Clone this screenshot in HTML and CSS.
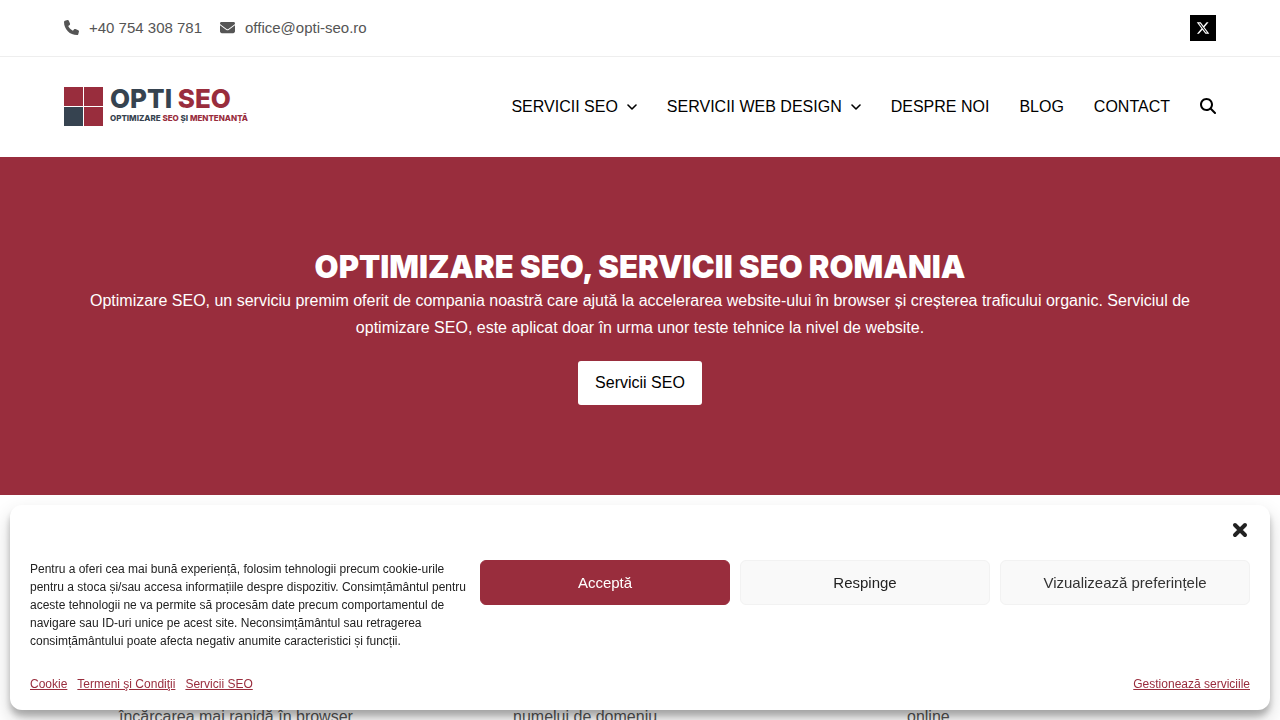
FILE: index.html
```
<!DOCTYPE html>
<html lang="ro">
<head>
  <meta charset="UTF-8">
  <meta name="viewport" content="width=device-width, initial-scale=1.0">
  <title>Optimizare SEO, Servicii SEO Romania - Opti SEO</title>
  <link rel="stylesheet" href="styles.css">
</head>
<body>
  <div class="top-bar">
    <div class="container top-bar-inner">
      <div class="contact">
        <a href="tel:+40754308781">
          <svg class="icon" viewBox="0 0 512 512" aria-hidden="true"><path d="M164.900 24.600c-7.700-18.600-28-28.500-47.400-23.200l-88 24C12.100 30.200 0 46 0 64c0 247.400 200.600 448 448 448c18 0 33.800-12.100 38.600-29.500l24-88c5.300-19.400-4.600-39.700-23.200-47.400l-96-40c-16.300-6.800-35.200-2.100-46.300 11.600L304.700 368C234.300 334.700 177.300 277.700 144 207.300L193.300 167c13.700-11.200 18.400-30 11.600-46.300l-40-96z"/></svg>
          +40 754 308 781
        </a>
        <a href="mailto:office@opti-seo.ro">
          <svg class="icon" viewBox="0 0 512 512" aria-hidden="true"><path d="M48 64C21.500 64 0 85.500 0 112c0 15.100 7.100 29.300 19.200 38.400L236.800 313.600c11.400 8.500 27 8.500 38.400 0L492.800 150.400c12.100-9.100 19.200-23.300 19.200-38.400c0-26.500-21.500-48-48-48H48zM0 176V384c0 35.300 28.700 64 64 64H448c35.300 0 64-28.700 64-64V176L294.400 339.200c-22.800 17.100-54 17.100-76.800 0L0 176z"/></svg>
          office@opti-seo.ro
        </a>
      </div>
      <a href="#" class="social" aria-label="X">
        <svg viewBox="0 0 512 512" aria-hidden="true"><path d="M389.200 48h70.600L305.600 224.200 487 464H345L233.700 318.600 106.500 464H35.800L200.700 275.500 26.800 48H172.400L272.900 180.900 389.200 48zM364.400 421.800h39.100L151.100 88h-42L364.400 421.800z"/></svg>
      </a>
    </div>
  </div>

  <header class="header">
    <div class="container header-inner">
      <a href="#" class="logo">
        <svg class="logo-mark" viewBox="0 0 39 39" aria-hidden="true">
          <path fill="#992d3d" d="M0 0h19v19H0zM20 0h19v19H20zM20 20h19v19H20z"/>
          <path fill="#364350" d="M0 20h19v19H0z"/>
        </svg>
        <span class="logo-text">
          <span class="logo-name">OPTI <em>SEO</em></span>
          <span class="logo-tagline">OPTIMIZARE <em>SEO</em> ȘI <em>MENTENANȚĂ</em></span>
        </span>
      </a>
      <nav class="nav">
        <a href="#">SERVICII SEO <svg class="chevron" viewBox="0 0 11 11" aria-hidden="true"><path d="M2 4l4 4 4-4"/></svg></a>
        <a href="#">SERVICII WEB DESIGN <svg class="chevron" viewBox="0 0 11 11" aria-hidden="true"><path d="M2 4l4 4 4-4"/></svg></a>
        <a href="#">DESPRE NOI</a>
        <a href="#">BLOG</a>
        <a href="#">CONTACT</a>
        <button type="button" class="search" aria-label="Caută">
          <svg viewBox="0 0 512 512" aria-hidden="true"><path d="M416 208c0 45.900-14.900 88.300-40 122.700L502.600 457.400c12.500 12.500 12.500 32.800 0 45.300s-32.800 12.500-45.300 0L330.700 376c-34.400 25.200-76.800 40-122.700 40C93.100 416 0 322.900 0 208S93.100 0 208 0S416 93.100 416 208zM208 352a144 144 0 1 0 0-288 144 144 0 1 0 0 288z"/></svg>
        </button>
      </nav>
    </div>
  </header>

  <main>
    <section class="hero">
      <div class="container">
        <h1>OPTIMIZARE SEO, SERVICII SEO ROMANIA</h1>
        <p>Optimizare SEO, un serviciu premim oferit de compania noastră care ajută la accelerarea website-ului în browser și creșterea traficului organic. Serviciul de optimizare SEO, este aplicat doar în urma unor teste tehnice la nivel de website.</p>
        <a href="#" class="btn">Servicii SEO</a>
      </div>
    </section>

    <section class="container features">
      <p>încărcarea mai rapidă în browser</p>
      <p>numelui de domeniu</p>
      <p>online</p>
    </section>
  </main>

  <!-- Cookie consent -->
  <div class="cookie-banner" role="dialog" aria-label="Cookie">
    <div class="cookie-header">
      <button type="button" class="cookie-close" aria-label="Închide">
        <svg viewBox="0 0 20 20" aria-hidden="true"><path d="M5 5l10 10M15 5L5 15"/></svg>
      </button>
    </div>
    <div class="cookie-body">
      <p>Pentru a oferi cea mai bună experiență, folosim tehnologii precum cookie-urile pentru a stoca și/sau accesa informațiile despre dispozitiv. Consimțământul pentru aceste tehnologii ne va permite să procesăm date precum comportamentul de navigare sau ID-uri unice pe acest site. Neconsimțământul sau retragerea consimțământului poate afecta negativ anumite caracteristici și funcții.</p>
      <div class="cookie-buttons">
        <button type="button" class="accept">Acceptă</button>
        <button type="button">Respinge</button>
        <button type="button" class="preferences">Vizualizează preferințele</button>
      </div>
    </div>
    <div class="cookie-links">
      <div class="cookie-docs">
        <a href="#">Cookie</a>
        <a href="#">Termeni şi Condiţii</a>
        <a href="#">Servicii SEO</a>
      </div>
      <a href="#">Gestionează serviciile</a>
    </div>
  </div>
</body>
</html>
```
FILE: styles.css
```
* {
  box-sizing: border-box;
}

body {
  margin: 0;
  font-family: "Liberation Sans", Arial, sans-serif;
  font-size: 16px;
  line-height: 27px;
  color: #555;
  background-color: #fff;
}

a {
  color: inherit;
  text-decoration: none;
}

.container {
  width: 90%;
  max-width: 1200px;
  margin: 0 auto;
}

/* Top bar */
.top-bar {
  border-bottom: 1px solid #eee;
  font-size: 15px;
}

.top-bar-inner {
  display: flex;
  justify-content: space-between;
  align-items: center;
  padding: 15px 0;
  line-height: 26px;
}

.contact {
  display: flex;
  gap: 18px;
}

.contact a {
  display: flex;
  align-items: center;
  gap: 10px;
}

.icon {
  width: 15px;
  height: 15px;
  margin-bottom: 2px;
  fill: #555;
}

.social {
  display: flex;
  align-items: center;
  justify-content: center;
  width: 26px;
  height: 26px;
  background-color: #000;
}

.social svg {
  width: 14px;
  height: 14px;
  fill: #fff;
}

/* Header */
.header-inner {
  display: flex;
  justify-content: space-between;
  align-items: center;
  height: 100px;
  padding-bottom: 2px;
}

.logo {
  display: flex;
  align-items: center;
  gap: 7px;
  color: #364350;
  font-family: Inter, sans-serif;
  font-weight: 800;
}

.logo em {
  font-style: normal;
  color: #992d3d;
}

.logo-mark {
  width: 39px;
  height: 39px;
}

.logo-text {
  display: flex;
  flex-direction: column;
}

.logo-name {
  font-size: 26px;
  line-height: 24px;
}

.logo-tagline {
  font-size: 8px;
  line-height: 14px;
}

.nav {
  display: flex;
  align-items: center;
  gap: 30px;
  color: #000;
}

.nav a {
  display: flex;
  align-items: center;
  gap: 8px;
}

.chevron {
  width: 11px;
  height: 11px;
  fill: none;
  stroke: #000;
  stroke-width: 1.6;
  stroke-linecap: round;
  stroke-linejoin: round;
}

.search {
  display: flex;
  padding: 0;
  border: 0;
  background: none;
}

.search svg {
  width: 16px;
  height: 16px;
}

/* Hero */
.hero {
  padding: 90px 0;
  background-color: #992d3d;
  color: #fff;
  text-align: center;
}

.hero h1 {
  margin: 0;
  font-family: Inter, "Liberation Sans", sans-serif;
  font-size: 31px;
  font-weight: 900;
  line-height: 40px;
}

.hero p {
  margin: 0 0 20px;
  padding: 0 20px;
}

.btn {
  display: block;
  width: fit-content;
  margin: 0 auto;
  padding: 8px 17px;
  border-radius: 3px;
  background-color: #fff;
  color: #000;
  line-height: 28px;
}

/* Features */
.features {
  display: grid;
  grid-template-columns: repeat(3, 1fr);
  gap: 30px;
  padding: 208px 0 60px;
}

.features p {
  margin: 0;
  padding-left: 55px;
}

/* Cookie banner */
.cookie-banner {
  position: fixed;
  left: 10px;
  right: 10px;
  bottom: 10px;
  padding: 15px 20px 17px;
  border-radius: 12px;
  background-color: #fff;
  color: #222;
  font-size: 12px;
  line-height: 18px;
  box-shadow: rgba(0, 0, 0, 0.19) 0 10px 20px, rgba(0, 0, 0, 0.23) 0 6px 6px;
}

.cookie-header {
  display: flex;
  justify-content: flex-end;
  height: 40px;
}

.cookie-close {
  width: 20px;
  height: 20px;
  padding: 0;
  border: 0;
  background: none;
}

.cookie-close svg {
  display: block;
  width: 20px;
  height: 20px;
  fill: none;
  stroke: #222;
  stroke-width: 4;
  stroke-linecap: round;
}

.cookie-body {
  display: grid;
  grid-template-columns: 4fr 7fr;
  gap: 10px;
}

.cookie-body p {
  margin: 0;
}

.cookie-buttons {
  display: grid;
  grid-template-columns: repeat(3, 1fr);
  gap: 10px;
  align-items: start;
}

.cookie-buttons button {
  height: 45px;
  padding: 0 10px;
  border: 1px solid #f2f2f2;
  border-radius: 6px;
  background-color: #f9f9f9;
  color: #222;
  font-family: inherit;
  font-size: 15px;
}

.cookie-buttons .accept {
  border-color: #992d3d;
  background-color: #992d3d;
  color: #fff;
}

.cookie-buttons .preferences {
  color: #333;
}

.cookie-links {
  display: flex;
  justify-content: space-between;
  margin-top: 25px;
  color: #992d3d;
}

.cookie-links a {
  text-decoration: underline;
}

.cookie-docs {
  display: flex;
  gap: 10px;
}
```
